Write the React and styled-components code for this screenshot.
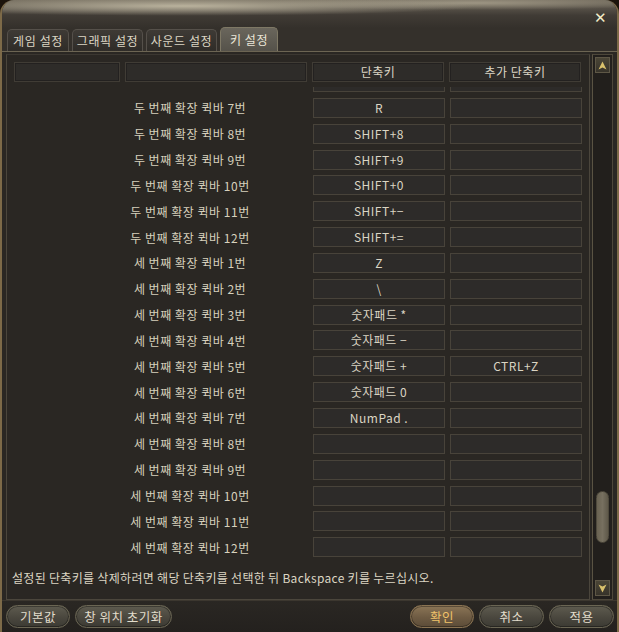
import styled, { createGlobalStyle } from "styled-components";

const GlobalStyle = createGlobalStyle`
  html, body {
    margin: 0;
    padding: 0;
    background: #1c140c;
  }
  * { box-sizing: border-box; }
`;

const KR = `"Noto Sans CJK KR", "Noto Sans", "DejaVu Sans", sans-serif`;

const Window = styled.div`
  width: 619px;
  height: 632px;
  display: flex;
  flex-direction: column;
  font-family: ${KR};
  font-size: 12px;
  letter-spacing: 0.5px;
  color: #d9d3c0;
  background: #2a2723;
  border-radius: 14px 14px 0 0;
  border-left: 2px solid #7d6a48;
  border-right: 2px solid #7d6a48;
  overflow: hidden;
`;

const TitleBar = styled.div`
  height: 28px;
  display: flex;
  justify-content: flex-end;
  align-items: flex-start;
  padding: 11px 10px 0 0;
  background:
    radial-gradient(ellipse 420px 14px at 180px 6px, rgba(196, 188, 166, 0.9), rgba(196, 188, 166, 0) 70%),
    radial-gradient(ellipse 300px 10px at 470px 3px, rgba(176, 168, 148, 0.75), rgba(176, 168, 148, 0) 70%),
    linear-gradient(180deg, #6d6658 0%, #5a544a 25%, #403b35 55%, #34302b 100%);
`;

const Close = styled.div`
  color: #f3ecc8;
  font-family: "DejaVu Sans", sans-serif;
  font-size: 15px;
  line-height: 15px;
`;

const TabRow = styled.div`
  height: 24px;
  display: flex;
  align-items: flex-end;
  gap: 3px;
  padding-left: 5px;
  background: #34302b;
  border-bottom: 1px solid #6c6553;
`;

const Tab = styled.div`
  height: ${(p) => (p.active ? 24 : 22)}px;
  width: ${(p) => p.w}px;
  display: flex;
  align-items: center;
  justify-content: center;
  font-size: 12px;
  letter-spacing: 0.6px;
  border: 1px solid ${(p) => (p.active ? "#7e7865" : "#55504a")};
  border-bottom: none;
  border-radius: 5px 5px 0 0;
  color: ${(p) => (p.active ? "#eae6d8" : "#dcd6c4")};
  background: ${(p) =>
    p.active
      ? "linear-gradient(180deg, #6a665c 0%, #55524a 100%)"
      : "linear-gradient(180deg, #3e3a35 0%, #2f2c28 100%)"};
`;

const Body = styled.div`
  flex: 1;
  display: flex;
  padding: 2px 4px 0 4px;
  gap: 2px;
  border-bottom: 1px solid #3c372f;
`;

const TablePanel = styled.div`
  width: 584px;
  display: flex;
  flex-direction: column;
  border: 1px solid #4b463c;
  border-top-color: #3b3731;
  background: #2a2723;
`;

const HeaderRow = styled.div`
  display: flex;
  gap: 5px;
  padding: 7px 0 0 7px;
`;

const HeadCell = styled.div`
  width: ${(p) => p.w}px;
  height: 20px;
  display: flex;
  align-items: center;
  justify-content: center;
  line-height: 1;
  border: 1px solid #403c35;
  box-shadow: inset 0 0 0 1px #232120;
  background: #2e2c29;
  color: #dcd6c6;
`;

const Viewport = styled.div`
  margin-top: 5px;
  height: 474px;
  overflow: hidden;
`;

const RowList = styled.div`
  display: flex;
  flex-direction: column;
  gap: 5.85px;
  margin-top: -15px;
`;

const Row = styled.div`
  display: flex;
  align-items: center;
  height: 20px;
`;

const Label = styled.div`
  width: 240px;
  margin-left: 63px;
  text-align: center;
  color: #d7d1bd;
  white-space: nowrap;
`;

const KeyCell = styled.div`
  width: 132px;
  height: 20px;
  margin-left: ${(p) => p.ml}px;
  display: flex;
  align-items: center;
  justify-content: center;
  line-height: 1;
  border: 1px solid #48433a;
  background: #2d2b29;
  color: #dbd5c4;
  white-space: nowrap;
`;

const Hint = styled.div`
  padding: 8px 0 0 5px;
  color: #dcd6c3;
  letter-spacing: 0.3px;
  white-space: nowrap;
`;

const ScrollBar = styled.div`
  width: 21px;
  display: flex;
  flex-direction: column;
  align-items: center;
  padding: 2px 0 3px;
  border: 1px solid #4d473a;
  border-left-color: #5a5343;
  background: #221f1c;
`;

const ArrowBtn = styled.div`
  width: 15px;
  height: 16px;
  display: flex;
  align-items: center;
  justify-content: center;
  border: 1px solid #5e5746;
  background: linear-gradient(180deg, #4a4536, #37332a);
`;

const Track = styled.div`
  flex: 1;
  width: 100%;
  display: flex;
  flex-direction: column;
  align-items: center;
`;

const Thumb = styled.div`
  width: 13px;
  height: 52px;
  border-radius: 7px;
  border: 1px solid #4f4a3d;
  background: linear-gradient(90deg, #6a6352 0%, #777060 50%, #5f594a 100%);
`;

const Footer = styled.div`
  height: 31px;
  display: flex;
  align-items: center;
  gap: 5px;
  padding: 0 3px 0 4px;
  background: linear-gradient(180deg, #2a2723, #24211e);
`;

const Btn = styled.div`
  width: ${(p) => p.w}px;
  height: 23px;
  margin-left: ${(p) => p.ml || 0}px;
  display: flex;
  align-items: center;
  justify-content: center;
  border-radius: 12px;
  border: 1px solid ${(p) => (p.primary ? "#8a7352" : "#6a6553")};
  box-shadow: inset 0 0 0 1px rgba(0, 0, 0, 0.35);
  color: ${(p) => (p.primary ? "#f0c36a" : "#e2ddcc")};
  font-size: 12.5px;
  background: ${(p) =>
    p.primary
      ? "linear-gradient(180deg, #8b7556 0%, #6e5b43 55%, #5c4c38 100%)"
      : "linear-gradient(180deg, #5e5b4f 0%, #4a473e 55%, #3c3a33 100%)"};
`;

const Arrow = ({ up }) => (
  <svg width="9" height="9" viewBox="0 0 9 9">
    <path
      d={up ? "M4.5 0.5 L8.5 8.5 L4.5 6.5 L0.5 8.5 Z" : "M4.5 8.5 L8.5 0.5 L4.5 2.5 L0.5 0.5 Z"}
      fill="#d9c16c"
    />
  </svg>
);

// first entry is the row scrolled mostly out of view: only its cell bottoms show
const rows = [
  ["", "", ""],
  ["두 번째 확장 퀵바 7번", "R", ""],
  ["두 번째 확장 퀵바 8번", "SHIFT+8", ""],
  ["두 번째 확장 퀵바 9번", "SHIFT+9", ""],
  ["두 번째 확장 퀵바 10번", "SHIFT+0", ""],
  ["두 번째 확장 퀵바 11번", "SHIFT+−", ""],
  ["두 번째 확장 퀵바 12번", "SHIFT+=", ""],
  ["세 번째 확장 퀵바 1번", "Z", ""],
  ["세 번째 확장 퀵바 2번", "\\", ""],
  ["세 번째 확장 퀵바 3번", "숫자패드 *", ""],
  ["세 번째 확장 퀵바 4번", "숫자패드 −", ""],
  ["세 번째 확장 퀵바 5번", "숫자패드 +", "CTRL+Z"],
  ["세 번째 확장 퀵바 6번", "숫자패드 0", ""],
  ["세 번째 확장 퀵바 7번", "NumPad .", ""],
  ["세 번째 확장 퀵바 8번", "", ""],
  ["세 번째 확장 퀵바 9번", "", ""],
  ["세 번째 확장 퀵바 10번", "", ""],
  ["세 번째 확장 퀵바 11번", "", ""],
  ["세 번째 확장 퀵바 12번", "", ""],
];

const tabs = [
  ["게임 설정", 62],
  ["그래픽 설정", 71],
  ["사운드 설정", 71],
  ["키 설정", 58, true],
];

export default function App() {
  return (
    <>
      <GlobalStyle />
      <Window>
        <TitleBar>
          <Close>✕</Close>
        </TitleBar>
        <TabRow>
          {tabs.map(([t, w, active]) => (
            <Tab key={t} w={w} active={active}>
              {t}
            </Tab>
          ))}
        </TabRow>
        <Body>
          <TablePanel>
            <HeaderRow>
              <HeadCell w={106} />
              <HeadCell w={182} />
              <HeadCell w={132}>단축키</HeadCell>
              <HeadCell w={132}>추가 단축키</HeadCell>
            </HeaderRow>
            <Viewport>
              <RowList>
                {rows.map(([label, key, alt], i) => (
                  <Row key={i}>
                    <Label>{label}</Label>
                    <KeyCell ml={3}>{key}</KeyCell>
                    <KeyCell ml={5}>{alt}</KeyCell>
                  </Row>
                ))}
              </RowList>
            </Viewport>
            <Hint>
              설정된 단축키를 삭제하려면 해당 단축키를 선택한 뒤 Backspace 키를 누르십시오.
            </Hint>
          </TablePanel>
          <ScrollBar>
            <ArrowBtn>
              <Arrow up />
            </ArrowBtn>
            <Track>
              <Thumb style={{ marginTop: 418 }} />
            </Track>
            <ArrowBtn>
              <Arrow />
            </ArrowBtn>
          </ScrollBar>
        </Body>
        <Footer>
          <Btn w={64}>기본값</Btn>
          <Btn w={97}>창 위치 초기화</Btn>
          <Btn w={64} ml={233} primary>
            확인
          </Btn>
          <Btn w={65}>취소</Btn>
          <Btn w={65}>적용</Btn>
        </Footer>
      </Window>
    </>
  );
}
